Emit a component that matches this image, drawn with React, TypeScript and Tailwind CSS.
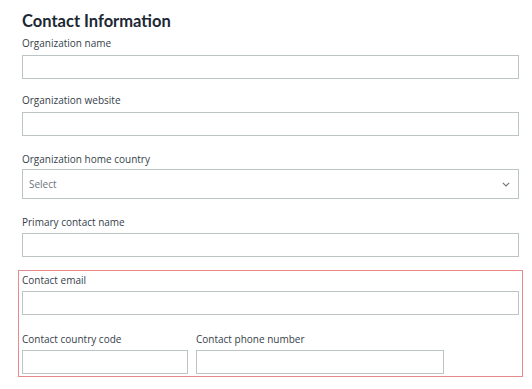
import React from "react";

const font = { fontFamily: '"Open Sans", "Liberation Sans", sans-serif' };

const Label = ({ text, className = "" }: { text: string; className?: string }) => (
  <div className={`h-[14px] text-[10px] leading-[14px] font-medium text-[#36404a] ${className}`}>{text}</div>
);

const Input = ({ className = "" }: { className?: string }) => (
  <div className={`h-[24px] border border-[#bcc4c6] bg-white ${className}`}></div>
);

const App = () => {
  return (
    <div className="w-[532px] h-[389px] bg-white pl-[22px] pr-[13px] pt-[11px]" style={font}>
      <h1 className="h-[21px] font-['Lato',sans-serif] text-[16.5px] leading-[21px] font-bold text-[#1c2733]">
        Contact Information
      </h1>

      <Label text="Organization name" className="mt-[4px]" />
      <Input className="mt-[5px]" />

      <Label text="Organization website" className="mt-[14px]" />
      <Input className="mt-[5px]" />

      <Label text="Organization home country" className="mt-[16px]" />
      <div className="mt-[3px] h-[30px] border border-[#bcc4c6] flex items-center justify-between pl-[6px] pr-[8px]">
        <span className="text-[10px] text-[#6b737b]">Select</span>
        <svg width="8" height="5" viewBox="0 0 8 5" fill="none">
          <path d="M0.8 0.8L4 4L7.2 0.8" stroke="#6b737b" strokeWidth="1.1" />
        </svg>
      </div>

      <Label text="Primary contact name" className="mt-[16px]" />
      <Input className="mt-[4px]" />

      <div className="mt-[13px] ml-[-4px] w-[505px] h-[107px] border border-[#e68a8c] pl-[3px] pr-[3px] pt-[2px]">
        <Label text="Contact email" />
        <Input className="mt-[4px]" />
        <div className="mt-[17px] flex gap-[8px]">
          <div className="w-[166px]">
            <Label text="Contact country code" />
            <Input className="mt-[4px]" />
          </div>
          <div className="w-[248px]">
            <Label text="Contact phone number" />
            <Input className="mt-[4px]" />
          </div>
        </div>
      </div>
    </div>
  );
};

export default App;
